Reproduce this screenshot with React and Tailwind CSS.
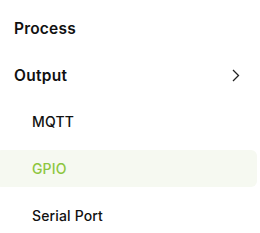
export default function App() {
  const subs = [
    { label: "MQTT", active: false },
    { label: "GPIO", active: true },
    { label: "Serial Port", active: false },
  ];
  return (
    <div className="w-[260px] h-[233px] bg-white overflow-hidden" style={{ fontFamily: "Inter, 'DejaVu Sans', sans-serif" }}>
      <div className="flex flex-col pt-[4px]">
        <div className="h-[47px] flex items-center pl-[14px] pt-[2px] text-[15.5px] tracking-[0.2px] font-semibold text-[#111]">Process</div>
        <div className="h-[47px] flex items-center justify-between pl-[14px] pr-[20px] pt-[2px] text-[15.5px] tracking-[0.3px] font-semibold text-[#111]">
          <span>Output</span>
          <svg width="8" height="13" viewBox="0 0 8 13" fill="none">
            <path d="M1 1l5.5 5.5L1 12" stroke="#222" strokeWidth="1.3" />
          </svg>
        </div>
        {subs.map((s) => (
          <div
            key={s.label}
            className={`h-[37px] my-[5px] -ml-[4px] mr-[3px] flex items-center pl-[36px] rounded-[6px] text-[14px] tracking-[0.15px] font-medium ${
              s.active ? "bg-[#f6f9f1] text-[#8dc63f]" : "text-[#111]"
            }`}
          >
            {s.label}
          </div>
        ))}
      </div>
    </div>
  );
}
